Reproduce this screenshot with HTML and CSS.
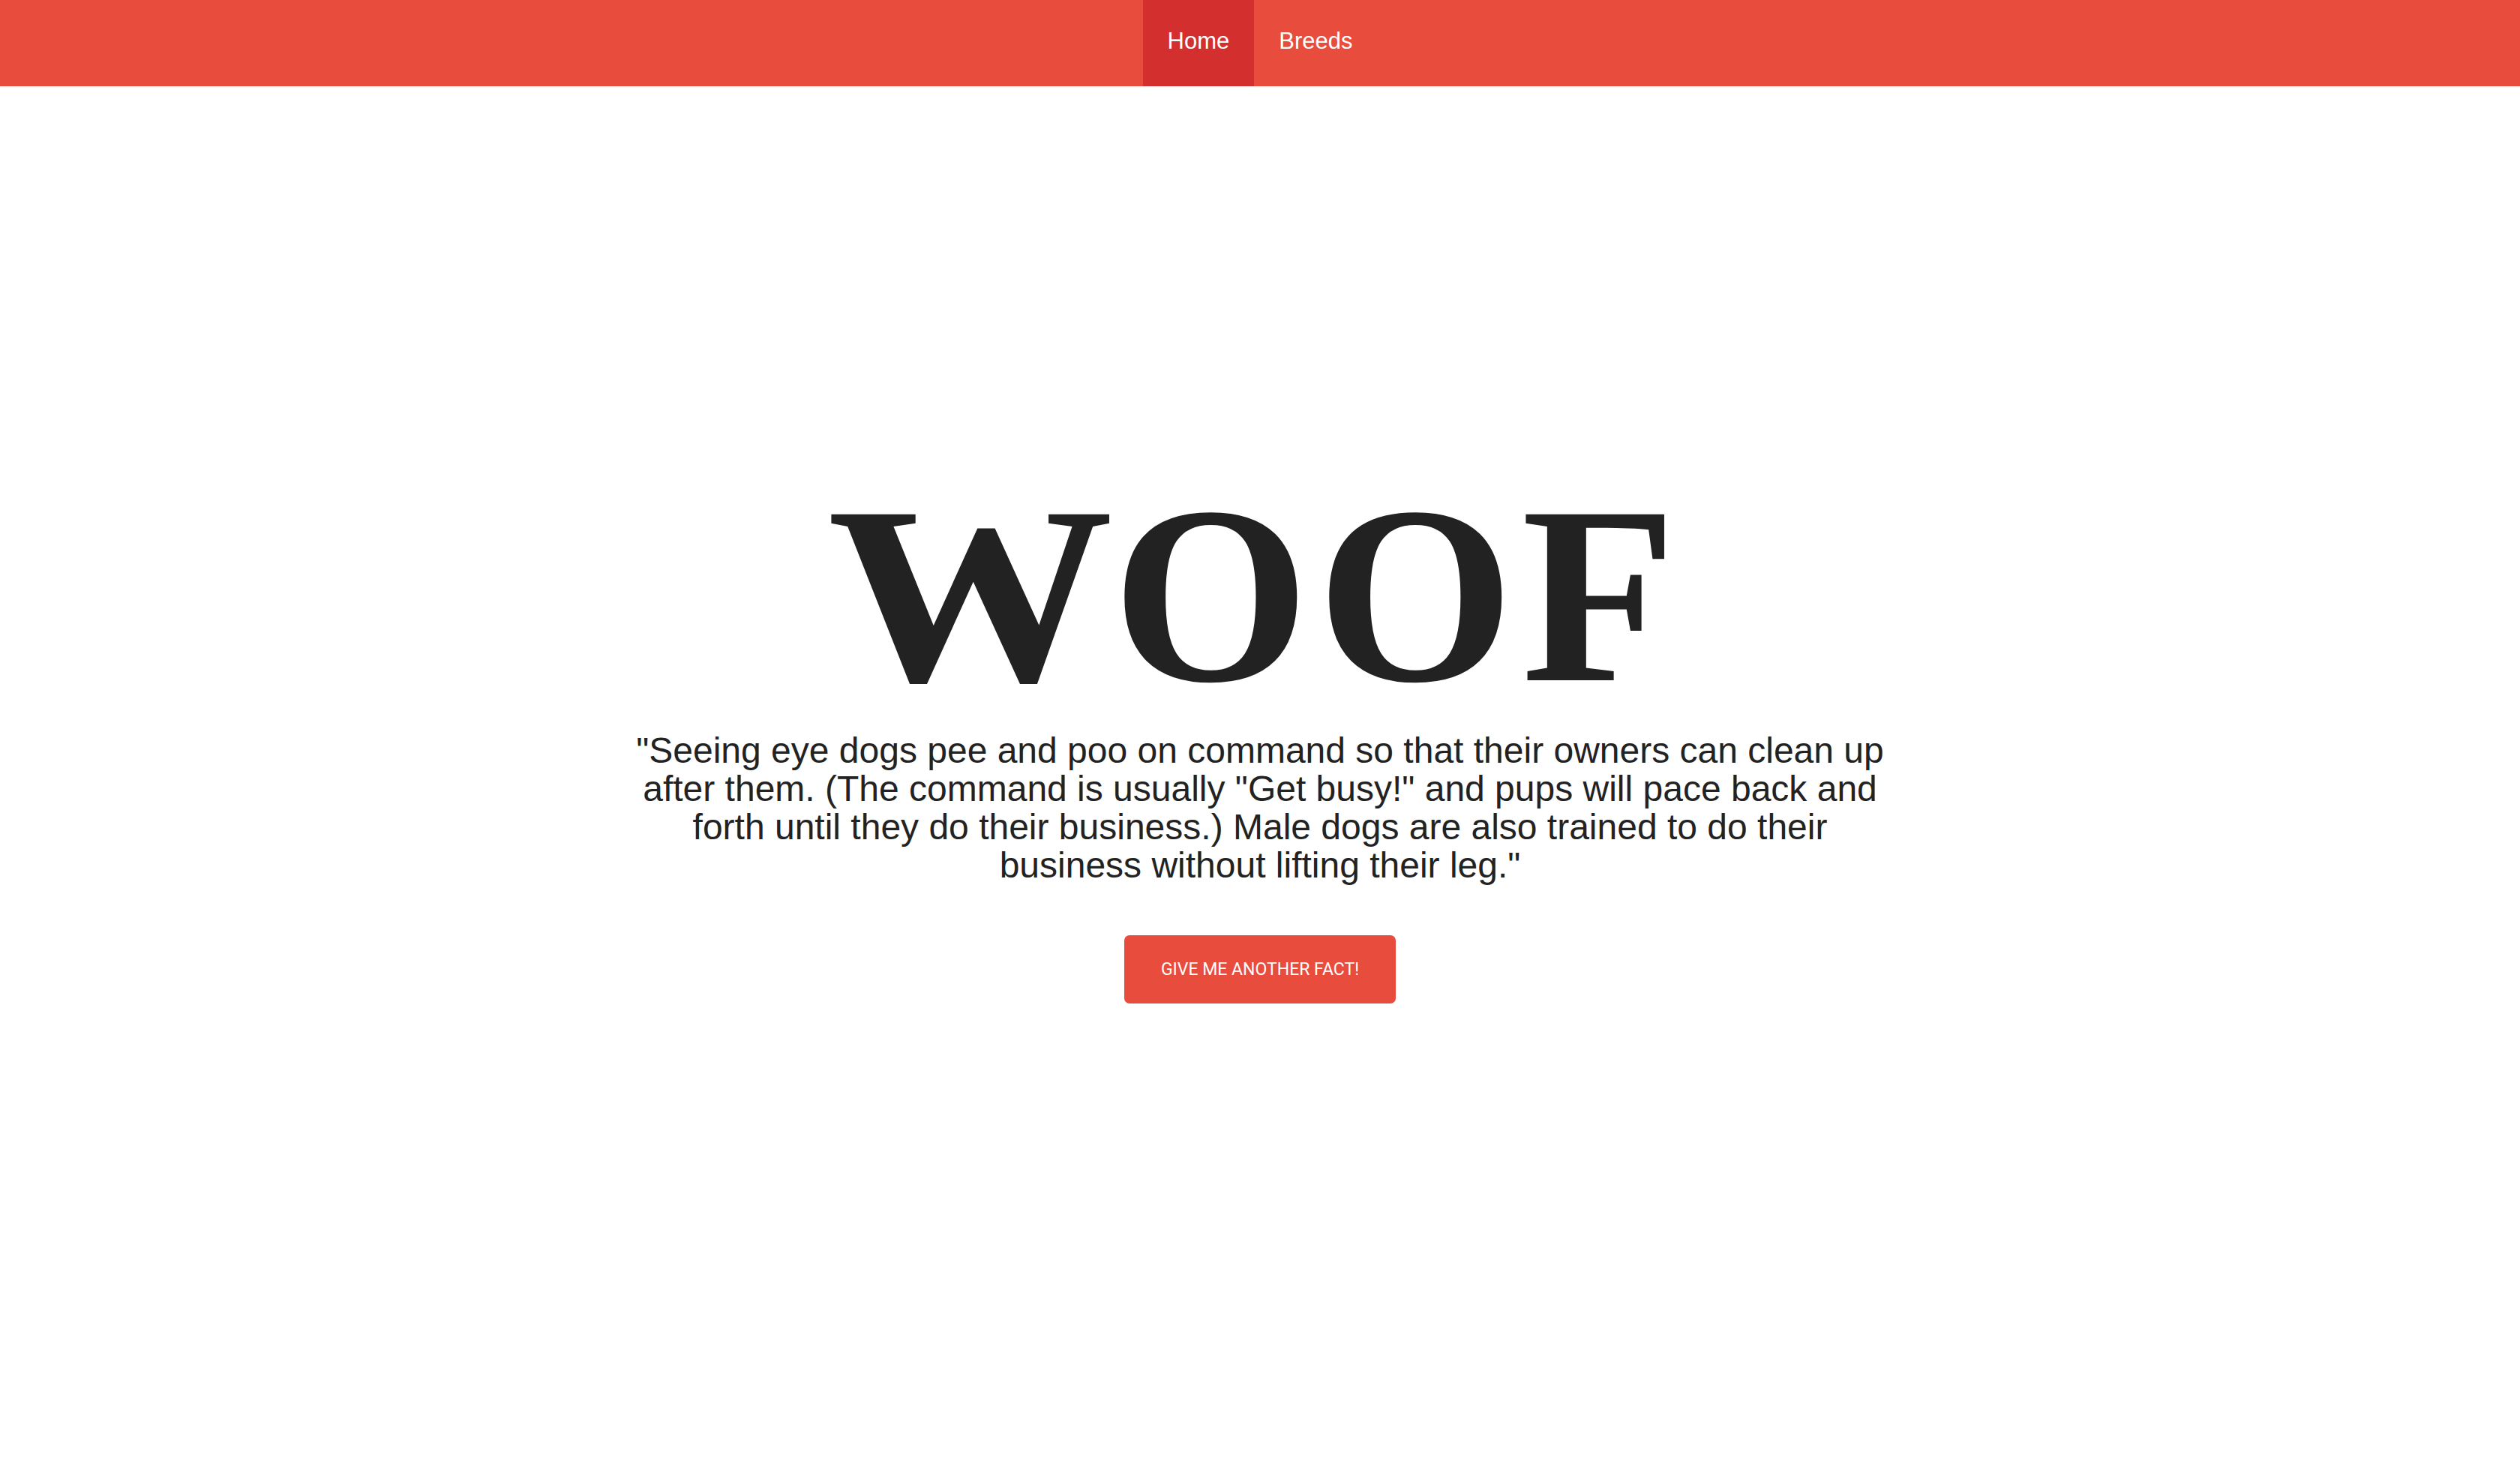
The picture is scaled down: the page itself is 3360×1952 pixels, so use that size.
FILE: index.html
```html
<!DOCTYPE html>
<html lang="en">
<head>
<meta charset="utf-8">
<title>Woof</title>
<link rel="stylesheet" href="styles.css">
</head>
<body>
<nav class="topnav">
  <a class="nav-link active" href="#">Home</a>
  <a class="nav-link" href="#">Breeds</a>
</nav>
<main class="hero">
  <h1 class="title"><span class="title-wide">W</span>OOF</h1>
  <p class="fact">"Seeing eye dogs pee and poo on command so that their owners can clean up after them. (The command is usually "Get busy!" and pups will pace back and forth until they do their business.) Male dogs are also trained to do their business without lifting their leg."</p>
  <button class="fact-btn" type="button">Give me another fact!</button>
</main>
</body>
</html>
```

FILE: styles.css
```css
html, body {
  margin: 0;
  padding: 0;
  background: #ffffff;
}

body {
  font-family: "Liberation Sans", Arial, sans-serif;
  color: #222222;
}

.topnav {
  display: flex;
  justify-content: center;
  height: 115px;
  background: #e74c3c;
}

.nav-link {
  display: block;
  height: 115px;
  padding: 0 33px;
  line-height: 110px;
  font-size: 31px;
  color: #ffffff;
  text-decoration: none;
}

.nav-link.active {
  background: #d32f2f;
}

.hero {
  display: flex;
  flex-direction: column;
  align-items: center;
  padding-top: 509px;
}

.title {
  margin: 0;
  padding-right: 12px;
  font-family: "Liberation Serif", "Times New Roman", serif;
  font-weight: bold;
  font-size: 338px;
  line-height: 1;
  color: #222222;
  letter-spacing: 10px;
  white-space: nowrap;
}

.title-wide {
  display: inline-block;
  margin-right: 32px;
  transform: scaleX(1.13);
  transform-origin: left center;
}

.fact {
  width: 1680px;
  margin: 13px 0 0;
  font-size: 48px;
  line-height: 51px;
  text-align: center;
  color: #222222;
}

.fact-btn {
  margin-top: 68px;
  height: 91px;
  padding: 0 49px;
  border: none;
  border-radius: 7px;
  background: #e74c3c;
  color: #ffffff;
  font-family: Roboto, "Liberation Sans", sans-serif;
  font-size: 23px;
  text-transform: uppercase;
  cursor: pointer;
}
```
